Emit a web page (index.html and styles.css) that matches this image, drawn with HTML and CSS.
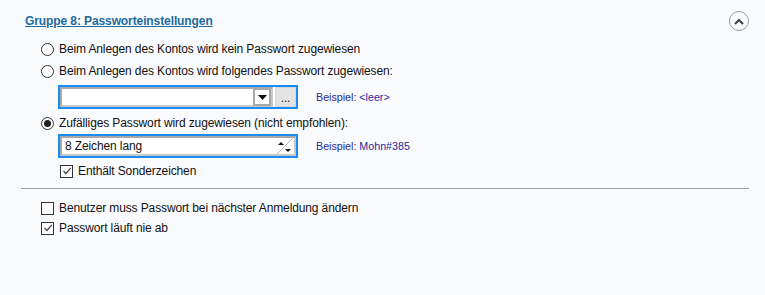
FILE: index.html
```html
<!DOCTYPE html>
<html lang="de">
<head>
  <meta charset="UTF-8">
  <title>Passworteinstellungen</title>
  <link rel="stylesheet" href="styles.css">
</head>
<body>
  <div class="group">
    <div class="group-head">
      <a class="group-title" href="#">Gruppe 8: Passworteinstellungen</a>
      <span class="toggle">
        <svg width="10" height="7" viewBox="0 0 10 7"><path d="M1 6 L5 2 L9 6" fill="none" stroke="#444" stroke-width="2.2"/></svg>
      </span>
    </div>

    <div class="options">
      <label class="row r1"><span class="radio"></span>Beim Anlegen des Kontos wird kein Passwort zugewiesen</label>
      <label class="row r2"><span class="radio"></span>Beim Anlegen des Kontos wird folgendes Passwort zugewiesen:</label>

      <div class="sub combo-row">
        <div class="focus-box">
          <div class="field">
            <span class="field-text"></span>
            <span class="drop">
              <svg width="9" height="5" viewBox="0 0 9 5"><path d="M0 0 H9 L4.5 5 Z" fill="#111"/></svg>
            </span>
          </div>
          <span class="dots">...</span>
        </div>
        <span class="hint">Beispiel: &lt;leer&gt;</span>
      </div>

      <label class="row r3"><span class="radio on"></span>Zufälliges Passwort wird zugewiesen (nicht empfohlen):</label>

      <div class="sub spin-row">
        <div class="focus-box">
          <div class="field">
            <span class="field-text">8 Zeichen lang</span>
            <span class="spin">
              <svg width="17" height="17" viewBox="0 0 17 17">
                <path d="M0.5 16.5 L16.5 0.5" stroke="#b5b5b5" stroke-width="1"/>
                <path d="M2 7 H8 L5 4 Z" fill="#111"/>
                <path d="M9 11 H15 L12 14 Z" fill="#111"/>
              </svg>
            </span>
          </div>
        </div>
        <span class="hint">Beispiel: Mohn#385</span>
      </div>

      <label class="row sub-check"><span class="check on"><svg width="10" height="10" viewBox="0 0 10 10"><path d="M1.5 5 L4 7.5 L8.8 1.8" fill="none" stroke="#444" stroke-width="1.2"/></svg></span>Enthält Sonderzeichen</label>
    </div>

    <hr class="divider">

    <div class="options">
      <label class="row"><span class="check"></span>Benutzer muss Passwort bei nächster Anmeldung ändern</label>
      <label class="row"><span class="check on"><svg width="10" height="10" viewBox="0 0 10 10"><path d="M1.5 5 L4 7.5 L8.8 1.8" fill="none" stroke="#444" stroke-width="1.2"/></svg></span>Passwort läuft nie ab</label>
    </div>
  </div>
</body>
</html>
```

FILE: styles.css
```css
body {
  margin: 0;
  background: #f9fafc;
  font-family: "Liberation Sans", Arial, sans-serif;
  font-size: 12px;
  letter-spacing: -0.12px;
  color: #111;
}

.group {
  width: 728px;
  margin-left: 21px;
  padding-top: 11px;
}

.group-head {
  display: flex;
  justify-content: space-between;
  align-items: center;
  height: 20px;
  padding-left: 4px;
}

.group-title {
  color: #1d6aa0;
  font-weight: bold;
  font-size: 12px;
  letter-spacing: -0.1px;
  text-decoration: underline;
}

.toggle {
  width: 18px;
  height: 18px;
  border: 1px solid #9a9a9a;
  border-radius: 50%;
  display: flex;
  align-items: center;
  justify-content: center;
}

.options {
  padding-left: 20px;
}

.group-head + .options {
  margin-top: 8px;
}

.row {
  display: flex;
  align-items: center;
  height: 20px;
}

.r2 {
  margin-top: 2px;
}

.r3 {
  margin-top: 4px;
}

.radio {
  width: 11px;
  height: 11px;
  border: 1px solid #333;
  border-radius: 50%;
  background: #fff;
  margin-right: 5px;
  display: flex;
  align-items: center;
  justify-content: center;
}

.radio.on::after {
  content: "";
  width: 7px;
  height: 7px;
  border-radius: 50%;
  background: #222;
}

.check {
  width: 11px;
  height: 11px;
  border: 1px solid #333;
  background: #fff;
  margin-right: 5px;
  display: flex;
  align-items: center;
  justify-content: center;
}

.sub {
  display: flex;
  align-items: center;
  margin-left: 17px;
}

.combo-row {
  margin-top: 4px;
}

.spin-row {
  margin-top: 1px;
}

.sub-check {
  margin-left: 19px;
  margin-top: 3px;
}

.focus-box {
  display: flex;
  width: 236px;
  height: 20px;
  border: 2px solid #1a8cf5;
  background: #fff;
}

.field {
  flex: 1;
  display: flex;
  align-items: center;
  border: 2px solid #a8a8a8;
  border-right-color: #c8c8c8;
  border-bottom-color: #c8c8c8;
  background: #fff;
}

.field-text {
  flex: 1;
  padding-left: 3px;
}

.drop {
  width: 14px;
  height: 14px;
  border: 2px solid #a8a8a8;
  display: flex;
  align-items: center;
  justify-content: center;
}

.dots {
  width: 21px;
  margin-left: 2px;
  background: #e3e3e3;
  border: 1px solid #d6d6d6;
  box-sizing: border-box;
  text-align: center;
  line-height: 20px;
  color: #222;
}

.spin {
  width: 17px;
  height: 17px;
  margin-right: 1px;
  display: flex;
}

.hint {
  margin-left: 18px;
  font-size: 10.7px;
  letter-spacing: 0;
  color: #282896;
}

.divider {
  border: none;
  border-top: 1px solid #a0a0a0;
  margin: 7px 0 9px 0;
}
```
